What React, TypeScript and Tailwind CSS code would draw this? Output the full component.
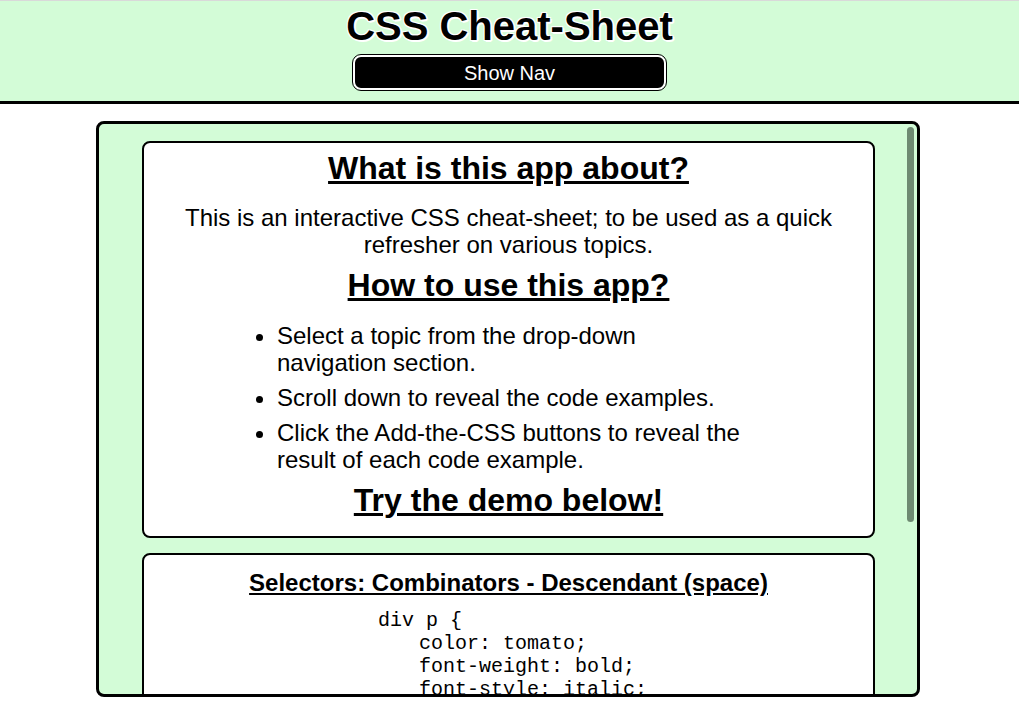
import React from "react";

const steps = [
	"Select a topic from the drop-down navigation section.",
	"Scroll down to reveal the code examples.",
	"Click the Add-the-CSS buttons to reveal the result of each code example.",
];

const Header: React.FC = () => (
	<header className="border-t border-[#d9d9d9] border-b-[3px] border-b-black bg-[#d3fcd7] flex flex-col items-center pt-[2px] pb-[11px]">
		<h1 className="text-[40px] leading-[46px] font-bold text-black [text-shadow:1px_1px_0_#fff,-1px_-1px_0_#fff,1px_-1px_0_#fff,-1px_1px_0_#fff,2px_1px_0_#fff,1px_2px_0_#fff]">
			CSS Cheat-Sheet
		</h1>
		<button className="mt-[6px] w-[313px] h-[35px] rounded-[8px] bg-black border-2 border-white outline outline-1 outline-black text-white text-[20px] leading-none flex items-center justify-center">
			Show Nav
		</button>
	</header>
);

const IntroCard: React.FC = () => (
	<section className="w-[733px] ml-[43px] bg-white border-2 border-black rounded-[8px] pt-[7px] pb-[17px] px-5 text-black">
		<h2 className="text-[32px] leading-[37px] font-bold underline text-center">
			What is this app about?
		</h2>
		<p className="mt-[17px] text-[24px] leading-[27px] text-center">
			This is an interactive CSS cheat-sheet; to be used as a quick refresher
			on various topics.
		</p>
		<h2 className="mt-[9px] text-[32px] leading-[37px] font-bold underline text-center">
			How to use this app?
		</h2>
		<ul className="mt-[18px] ml-[73px] w-[510px] pl-10 list-disc text-[24px] leading-[27px]">
			{steps.map((s, i) => (
				<li key={i} className={i > 0 ? "mt-[8px]" : ""}>
					{s}
				</li>
			))}
		</ul>
		<h2 className="mt-[9px] text-[32px] leading-[37px] font-bold underline text-center">
			Try the demo below!
		</h2>
	</section>
);

const CodeCard: React.FC = () => (
	<section className="mt-[15px] w-[733px] ml-[43px] bg-white border-2 border-black rounded-[8px] pt-[14px] pb-6 px-5 text-black">
		<h3 className="text-[24px] leading-[27px] font-bold underline text-center">
			Selectors: Combinators - Descendant (space)
		</h3>
		<pre className="mt-[13px] ml-[214px] font-['Liberation_Mono',monospace] text-[20px] leading-[23px]">
			<div>div p {"{"}</div>
			<div className="pl-[41px]">color: tomato;</div>
			<div className="pl-[41px]">font-weight: bold;</div>
			<div className="pl-[41px]">font-style: italic;</div>
			<div>{"}"}</div>
		</pre>
	</section>
);

export default function App() {
	return (
		<div className="min-h-[720px] bg-white font-['Liberation_Sans',Arial,sans-serif]">
			<Header />
			<main className="relative mt-[17px] ml-[96px] w-[824px] h-[576px] border-[3px] border-black rounded-[8px] bg-[#d3fcd7] overflow-hidden pt-[17px]">
				<IntroCard />
				<CodeCard />
				{/* overlay scrollbar thumb */}
				<div className="absolute right-[3px] top-[3px] w-[7px] h-[395px] rounded-full bg-[#6e8a72]" />
			</main>
		</div>
	);
}
